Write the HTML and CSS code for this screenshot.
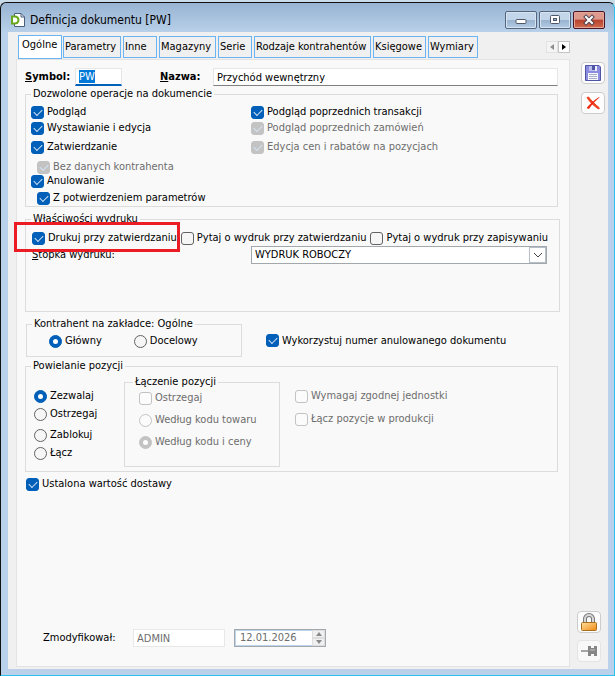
FILE: index.html
```html
<!DOCTYPE html>
<html lang="pl">
<head>
<meta charset="utf-8">
<title>Definicja dokumentu [PW]</title>
<link rel="stylesheet" href="styles.css">
</head>
<body>
<div class="window">
  <header class="titlebar">
    <svg class="app-icon" width="14" height="14" viewBox="0 0 14 14" aria-hidden="true">
      <path d="M3.500 .5h6.500l3.500 3.500v9.500h-10z" fill="#fff" stroke="#4a5f7c"/>
      <path d="M10 .5v3.500h3.500" fill="none" stroke="#4a5f7c"/>
      <path d="M0 2.500h4a4.500 4.500 0 0 1 0 9h-4z" fill="#6aa81c"/>
      <path d="M2 4.500h2a2.500 2.500 0 0 1 0 5h-2z" fill="#fff"/>
    </svg>
    <h1 class="title">Definicja dokumentu [PW]</h1>
    <div class="caption-buttons">
      <button class="caption" aria-label="Minimalizuj"><svg width="12" height="12" viewBox="0 0 12 12"><rect x="1" y="5.500" width="10" height="4" rx="1" fill="#fff" stroke="#4e5866"/></svg></button>
      <button class="caption" aria-label="Maksymalizuj"><svg width="12" height="12" viewBox="0 0 12 12"><rect x="1.500" y="1.500" width="9" height="8" rx="1" fill="#fff" stroke="#4e5866"/><rect x="4.500" y="4.500" width="3" height="2" fill="#9ab4d0" stroke="#4e5866"/></svg></button>
      <button class="caption caption-close" aria-label="Zamknij"><svg width="14" height="12" viewBox="0 0 14 12"><path d="M4 3l6 6M10 3l-6 6" stroke="#4e4450" stroke-width="4" stroke-linecap="square"/><path d="M4 3l6 6M10 3l-6 6" stroke="#fff" stroke-width="2" stroke-linecap="square"/></svg></button>
    </div>
  </header>

  <div class="client">
    <main class="content">
      <nav class="tabs">
        <button class="tab tab-active">Ogólne</button>
        <button class="tab w58">Parametry</button>
        <button class="tab w34">Inne</button>
        <button class="tab w57">Magazyny</button>
        <button class="tab w34">Serie</button>
        <button class="tab w117">Rodzaje kontrahentów</button>
        <button class="tab w53">Księgowe</button>
        <button class="tab w50">Wymiary</button>
        <div class="scrollers">
          <button class="scroller" disabled aria-label="Poprzednie"><svg width="4" height="6" viewBox="0 0 4 6"><path d="M4 0v6L0 3z" fill="#8d8d8d"/></svg></button>
          <button class="scroller scroller-on" aria-label="Następne"><svg width="4" height="6" viewBox="0 0 4 6"><path d="M0 0v6l4-3z" fill="#000"/></svg></button>
        </div>
      </nav>

      <form class="panel">
        <div class="head-row">
          <label class="head-label" for="symbol"><u>S</u>ymbol:</label>
          <input class="field field-focus" id="symbol" type="text" value="PW">
          <label class="head-label name-label" for="name"><u>N</u>azwa:</label>
          <input class="field field-name" id="name" type="text" value="Przychód wewnętrzny">
        </div>

        <fieldset class="group operations">
          <legend>Dozwolone operacje na dokumencie</legend>
          <div class="operations-grid">
            <label class="option"><input type="checkbox" checked>Podgląd</label>
            <label class="option"><input type="checkbox" checked>Podgląd poprzednich transakcji</label>
            <label class="option"><input type="checkbox" checked>Wystawianie i edycja</label>
            <label class="option off"><input type="checkbox" checked disabled>Podgląd poprzednich zamówień</label>
            <label class="option"><input type="checkbox" checked>Zatwierdzanie</label>
            <label class="option off"><input type="checkbox" checked disabled>Edycja cen i rabatów na pozycjach</label>
            <label class="option sub off"><input type="checkbox" checked disabled>Bez danych kontrahenta</label>
            <label class="option first"><input type="checkbox" checked>Anulowanie</label>
            <label class="option sub first"><input type="checkbox" checked>Z potwierdzeniem parametrów</label>
          </div>
        </fieldset>

        <fieldset class="group printing">
          <legend>Właściwości wydruku</legend>
          <div class="print-options">
            <label class="option"><input type="checkbox" checked>Drukuj przy zatwierdzaniu</label>
            <label class="option"><input type="checkbox">Pytaj o wydruk przy zatwierdzaniu</label>
            <label class="option"><input type="checkbox">Pytaj o wydruk przy zapisywaniu</label>
          </div>
          <div class="footer-row">
            <label for="footer"><u>S</u>topka wydruku:</label>
            <div class="combo">
              <select id="footer"><option>WYDRUK ROBOCZY</option></select>
              <span class="combo-arrow"><svg width="10" height="6" viewBox="0 0 10 6"><path d="M1 1l4 4 4-4" fill="none" stroke="#444"/></svg></span>
            </div>
          </div>
          <div class="highlight"></div>
        </fieldset>

        <div class="party-row">
          <fieldset class="group party">
            <legend>Kontrahent na zakładce: Ogólne</legend>
            <div class="party-options">
              <label class="option"><input type="radio" name="party" checked>Główny</label>
              <label class="option"><input type="radio" name="party">Docelowy</label>
            </div>
          </fieldset>
          <label class="option reuse"><input type="checkbox" checked>Wykorzystuj numer anulowanego dokumentu</label>
        </div>

        <fieldset class="group duplicates">
          <legend>Powielanie pozycji</legend>
          <div class="duplicates-columns">
            <div class="modes">
              <label class="option"><input type="radio" name="mode" checked>Zezwalaj</label>
              <label class="option"><input type="radio" name="mode">Ostrzegaj</label>
              <label class="option"><input type="radio" name="mode">Zablokuj</label>
              <label class="option"><input type="radio" name="mode">Łącz</label>
            </div>
            <fieldset class="group merging">
              <legend>Łączenie pozycji</legend>
              <div class="merging-options">
                <label class="option off"><input type="checkbox" disabled>Ostrzegaj</label>
                <label class="option off"><input type="radio" name="merge" disabled>Według kodu towaru</label>
                <label class="option off"><input type="radio" name="merge" checked disabled>Według kodu i ceny</label>
              </div>
            </fieldset>
            <div class="extras">
              <label class="option off"><input type="checkbox" disabled>Wymagaj zgodnej jednostki</label>
              <label class="option off"><input type="checkbox" disabled>Łącz pozycje w produkcji</label>
            </div>
          </div>
        </fieldset>

        <label class="option fixed-value"><input type="checkbox" checked>Ustalona wartość dostawy</label>

        <div class="modified">
          <label class="modified-label" for="author">Zmodyfikował:</label>
          <input class="field field-off" id="author" type="text" value="ADMIN" disabled>
          <div class="date">
            <input type="text" value="12.01.2026" aria-label="Data modyfikacji" disabled>
            <span class="spin">
              <button type="button" disabled aria-label="Później"><svg width="6" height="4" viewBox="0 0 6 4"><path d="M0 4l3-4 3 4z" fill="#8a8a8a"/></svg></button>
              <button type="button" disabled aria-label="Wcześniej"><svg width="6" height="4" viewBox="0 0 6 4"><path d="M0 0l3 4 3-4z" fill="#8a8a8a"/></svg></button>
            </span>
          </div>
        </div>
      </form>
    </main>

    <aside class="tools">
      <button class="tool top" aria-label="Zapisz">
        <svg width="16" height="16" viewBox="0 0 16 16"><path d="M.5.5h13.500l1.500 1.500v13.500h-15z" fill="#8b8ce0" stroke="#5054a4"/><rect x="4" y="1" width="8" height="5" fill="#b9bdea"/><rect x="7" y="1" width="3" height="4" fill="#5054a4"/><rect x="10" y="1" width="2" height="5" fill="#eef"/><rect x="3" y="8" width="10" height="7" fill="#f7f7ff"/><path d="M4 9.500h8M4 11.500h8M4 13.500h8" stroke="#a9adc4"/></svg>
      </button>
      <button class="tool top" aria-label="Anuluj">
        <svg width="16" height="14" viewBox="0 0 16 14"><path d="M2 1.500l1.500-.5C6 4 9.500 8 14.500 12l-1 1C9 10 4.500 6 2 1.500z" fill="#f0401c" stroke="#f0401c"/><path d="M14 1l.5.5C10 5 7 8.500 4 13L1.500 12C5 8 9 4 14 1z" fill="#ec2a14"/></svg>
      </button>
      <span class="fill"></span>
      <button class="tool" aria-label="Blokada">
        <svg width="16" height="18" viewBox="0 0 16 18"><defs><linearGradient id="gold" x2="1" y2="1"><stop offset="0" stop-color="#ffe0a0"/><stop offset="1" stop-color="#f08a10"/></linearGradient></defs><path d="M4 10V6a4 4 0 0 1 8 0v4" fill="none" stroke="#777" stroke-width="4"/><path d="M4 10V6a4 4 0 0 1 8 0v4" fill="none" stroke="#d8d8d8" stroke-width="2"/><rect x=".5" y="9.500" width="15" height="8" rx="1" fill="url(#gold)" stroke="#a9701c"/></svg>
      </button>
      <button class="tool tool-off" disabled aria-label="Przypnij">
        <svg width="16" height="12" viewBox="0 0 16 12"><path d="M0 6h8" stroke="#a4a4a4" stroke-width="2"/><path d="M7 1h3v2h3V1h3v10h-3V9h-3v2H7z" fill="#858585"/><path d="M9 5h5" stroke="#c4c4c4"/></svg>
      </button>
    </aside>
  </div>
</div>
<script src="script.js"></script>
</body>
</html>
```
FILE: styles.css
```css
* { box-sizing: border-box; }

body {
  margin: 0;
  background: #c9dbe9;
  color: #000;
  font: 11px/16px "DejaVu Sans Condensed", "DejaVu Sans", sans-serif;
}

button, input, select { font: inherit; color: inherit; margin: 0; }
button { padding: 0; display: flex; align-items: center; justify-content: center; }

.window {
  display: flex;
  flex-direction: column;
  min-height: calc(100vh - 2px);
  margin-top: 2px;
  padding: 0 6px 6px 7px;
  border: 1px solid #111;
  border-right-color: #30c0ee;
  border-bottom-color: #30c0ee;
  border-radius: 6px 6px 0 0;
  background: linear-gradient(#98b4d2, #b9d1ea 30px);
}

/* Title bar */
.titlebar { display: flex; align-items: center; height: 29px; padding: 5px 3px 0 3px; }
.title { flex: 1; margin: 0 0 0 5px; font-size: 12px; font-weight: normal; }
.caption-buttons { display: flex; gap: 2px; }
.caption {
  width: 32px;
  height: 18px;
  border: 1px solid #55667c;
  border-radius: 2px;
  background: linear-gradient(#c3d5e8 50%, #98b2cf 50%, #b4cce4);
  box-shadow: inset 0 0 0 1px #d6e4f2;
}
.caption-close {
  border-color: #4c1420;
  background: linear-gradient(#dd9a8c 45%, #b8412c 50%, #cf6c50);
  box-shadow: inset 0 0 0 1px #e2a79b;
}

/* Client area */
.client { flex: 1; display: flex; padding: 3px 2px 2px 8px; background: #f0f0f0; }
.content { flex: 1; display: flex; flex-direction: column; min-width: 0; }

.tabs { display: flex; align-items: center; gap: 2px; height: 24px; padding-left: 2px; }
.tab {
  justify-content: flex-start;
  height: 22px;
  padding: 0 0 0 1px;
  border: 1px solid #6ab4f4;
  background: #f0f0f0;
  white-space: nowrap;
}
.tab-active { width: 44px; height: 24px; padding: 0 0 4px 3px; margin-right: -1px; background: #fff; }
.w34 { width: 34px; }
.w50 { width: 50px; }
.w53 { width: 53px; }
.w57 { width: 57px; }
.w58 { width: 58px; }
.w117 { width: 117px; }
.scrollers { display: flex; margin-left: auto; }
.scroller { width: 12px; height: 12px; border: 1px solid #e2e2e2; background: #f4f4f4; }
.scroller-on { border-color: #c4c4c4; background: #fff; }

.panel {
  flex: 1;
  display: flex;
  flex-direction: column;
  padding: 8px 11px 19px 8px;
  border: 1px solid #e3e3e3;
  background: #f9f9f9;
}

/* Text fields */
.head-row { display: flex; align-items: center; }
.head-label { width: 50px; font-weight: bold; }
.name-label { width: 53px; margin-left: 38px; }
.field {
  height: 18px;
  padding: 0 3px;
  border: 1px solid #e6e6e6;
  border-bottom-color: #808080;
  background: #fff;
  outline: none;
}
.field-focus { width: 47px; border-bottom: 2px solid #005fb8; }
.field-focus::selection { background: #0078d7; color: #fff; }
.field-name { flex: 1; min-width: 0; }

/* Groups */
.group { min-width: 0; margin: 0; padding: 0; border: 1px solid #dcdcdc; }
.group > legend { height: 16px; margin-left: 5px; padding: 0 2px; }

/* Check boxes and radios */
.option { display: flex; align-items: center; gap: 3px; height: 16px; white-space: nowrap; }
.off { color: #6d6d6d; }
input[type="checkbox"], input[type="radio"] {
  appearance: none;
  flex: none;
  display: grid;
  place-items: center;
  width: 13px;
  height: 13px;
  border: 1px solid #626262;
  border-radius: 3px;
  background: #f6f6f6;
}
input[type="radio"] { border-radius: 50%; }
input[type="checkbox"]:checked, input[type="radio"]:checked { border-color: #005fb8; background: #005fb8; }
input[type="checkbox"]:disabled, input[type="radio"]:disabled { border-color: #c3c3c3; background: #fbfbfb; }
input[type="checkbox"]:checked:disabled, input[type="radio"]:checked:disabled { background: #c3c3c3; }
input[type="checkbox"]:checked::after {
  content: "";
  width: 7px;
  height: 4px;
  margin-bottom: 2px;
  border: solid #d4e4f4;
  border-width: 0 0 1px 1px;
  transform: rotate(-45deg);
}
input[type="radio"]:checked::after { content: ""; width: 5px; height: 5px; border-radius: 50%; background: #fff; }

.operations-grid {
  display: grid;
  grid-template-columns: 220px 1fr;
  grid-template-rows: 16px 16px 19px 20px 14px 17px;
  align-items: end;
  padding: 2px 0 0 5px;
}
.sub { padding-left: 6px; }
.first { grid-column: 1; }

.printing { position: relative; margin: 4px -2px 0 0; padding-bottom: 47px; }
.print-options { display: flex; gap: 4px; padding: 3px 0 0 6px; }
.footer-row { display: flex; align-items: center; justify-content: space-between; padding: 0 12px 0 6px; }
.combo {
  display: grid;
  grid-template-columns: 1fr 17px;
  flex: 0 1 296px;
  height: 18px;
  border: 1px solid #a3a8ac;
  background: #fff;
}
.combo select { appearance: none; padding: 0 3px; border: 0; background: none; outline: none; min-width: 0; }
.combo-arrow { display: grid; place-items: center; border: 1px solid #b4bfc9; pointer-events: none; }
.highlight {
  position: absolute;
  top: -5px;
  left: -12px;
  width: 166px;
  height: 30px;
  border: 3px solid #ec1c24;
  pointer-events: none;
}

.party-row { display: flex; align-items: center; margin: 4px 0 0 1px; }
.party { width: 216px; }
.party-options { display: flex; gap: 32px; padding: 1px 0 7px 22px; }
.reuse { margin: 8px 0 0 24px; }

.duplicates { margin-top: 1px; }
.duplicates-columns { display: flex; padding-bottom: 4px; }
.modes { width: 98px; padding: 14px 0 0 8px; }
.modes .option { margin-bottom: 2px; }
.modes .option:nth-child(2) { margin-bottom: 5px; }
.merging { width: 156px; }
.merging > legend { margin-left: 8px; }
.merging-options { display: flex; flex-direction: column; gap: 6px; padding: 0 0 16px 14px; }
.extras { display: flex; flex-direction: column; gap: 7px; padding: 14px 0 0 15px; }

.fixed-value { margin: 4px 0 0 1px; }

.modified { display: flex; align-items: center; margin-top: auto; padding-left: 18px; }
.modified-label { width: 90px; }
.field-off { width: 92px; border-color: #e8e8e8; background: #fff; color: #6d6d6d; }
.date { display: flex; width: 92px; height: 18px; margin-left: 9px; border: 1px solid #a3a8ac; background: #fff; }
.date input { flex: 1; min-width: 0; padding: 0 4px; border: 1px solid #bcd4ec; border-right: 0; background: #fff; color: #6d6d6d; }
.spin { display: flex; flex-direction: column; width: 13px; background: #f0f0f0; }
.spin button { flex: 1; border: 1px solid #dedede; background: #f0f0f0; }

/* Side buttons */
.tools { display: flex; flex-direction: column; align-items: flex-start; gap: 7px; width: 36px; padding: 27px 0 5px 7px; }
.tool { width: 24px; height: 22px; border: 1px solid #cccccc; border-radius: 4px; background: #fdfdfd; }
.top { margin-left: 4px; margin-bottom: 1px; }
.tool-off { border-color: #e4e4e4; background: #f8f8f8; }
.fill { flex: 1; }
```
FILE: script.js
```js
const symbol = document.getElementById("symbol");
symbol.focus();
symbol.select();
```
